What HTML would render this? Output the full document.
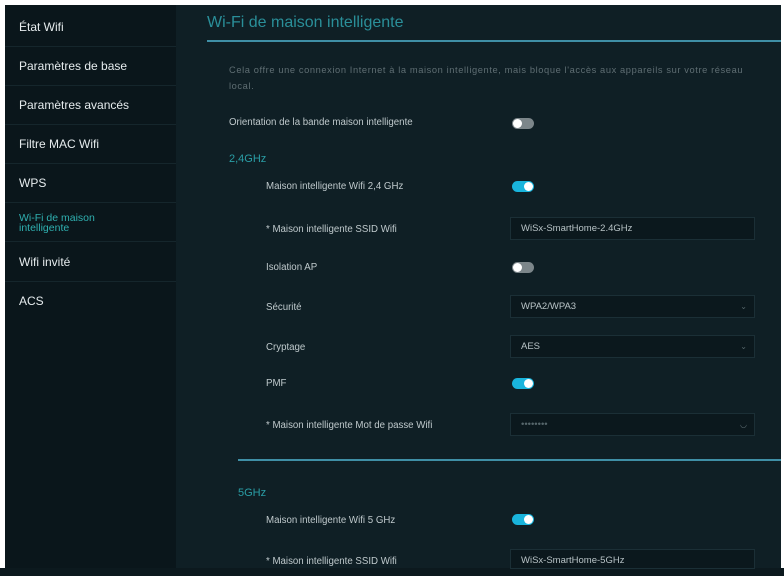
<!DOCTYPE html>
<html><head><meta charset="utf-8"><style>
*{margin:0;padding:0;box-sizing:border-box}
body{width:784px;height:576px;background:#fff;position:relative;overflow:hidden;font-family:"Liberation Sans",sans-serif}
#side{position:absolute;left:5px;top:5px;width:171px;height:563px;background:#0a161b}
#main{position:absolute;left:176px;top:5px;width:605px;height:563px;background:#0f1f25}
#bot{position:absolute;left:0;top:568px;width:784px;height:8px;background:#0c191e}
.si{position:absolute;left:0;width:171px;height:39px;border-bottom:1px solid #15262c;color:#e6ecee;font-size:12px;padding-left:14px;line-height:39px}
.a{position:absolute;font-size:9.7px;color:#bfc9cc;white-space:nowrap}
.tg{position:absolute;width:22px;height:11px;border-radius:6px}
.tg.on{background:#19b4dc}.tg.off{background:#7c868a}
.tg::after{content:"";position:absolute;top:1px;width:9px;height:9px;border-radius:50%;background:#fff}
.tg.on::after{right:1px}.tg.off::after{left:1px}
.in{position:absolute;left:510px;width:245px;height:23px;background:#0b181d;border:1px solid #1b2f36;color:#b8c3c6;font-size:9.5px;line-height:21px;padding-left:10px}
.ch{position:absolute;right:7px;top:0;color:#56666b;font-size:8px}
.sec{position:absolute;color:#2a9ea6;font-size:11px}
</style></head><body>
<div id="side">
<div class="si" style="top:3px">État Wifi</div>
<div class="si" style="top:42px">Paramètres de base</div>
<div class="si" style="top:81px">Paramètres avancés</div>
<div class="si" style="top:120px">Filtre MAC Wifi</div>
<div class="si" style="top:159px">WPS</div>
<div class="si" style="top:198px;color:#2fb0b0;line-height:10px;padding-top:10px;font-size:10.5px">Wi-Fi de maison<br>intelligente</div>
<div class="si" style="top:238px">Wifi invité</div>
<div class="si" style="top:277px;border:none">ACS</div>
</div>
<div id="main"></div>
<div id="bot"></div>
<div style="position:absolute;left:207px;top:14px;color:#2a8f99;font-size:16px">Wi-Fi de maison intelligente</div>
<div style="position:absolute;left:207px;top:40px;width:574px;height:2px;background:#3f8fa6"></div>
<div class="a" style="left:229px;top:62px;color:#5f6e73;font-size:9.3px;line-height:16px;letter-spacing:0.6px">Cela offre une connexion Internet à la maison intelligente, mais bloque l'accès aux appareils sur votre réseau<br>local.</div>
<div class="a" style="left:229px;top:117px">Orientation de la bande maison intelligente</div>
<div class="tg off" style="left:512px;top:118px"></div>
<div class="sec" style="left:229px;top:153px">2,4GHz</div>
<div class="a" style="left:266px;top:181px">Maison intelligente Wifi 2,4 GHz</div>
<div class="tg on" style="left:512px;top:181px"></div>
<div class="a" style="left:266px;top:224px">* Maison intelligente SSID Wifi</div>
<div class="in" style="top:217px">WiSx-SmartHome-2.4GHz</div>
<div class="a" style="left:266px;top:262px">Isolation AP</div>
<div class="tg off" style="left:512px;top:262px"></div>
<div class="a" style="left:266px;top:302px">Sécurité</div>
<div class="in" style="top:295px">WPA2/WPA3<span class="ch">⌄</span></div>
<div class="a" style="left:266px;top:342px">Cryptage</div>
<div class="in" style="top:335px">AES<span class="ch">⌄</span></div>
<div class="a" style="left:266px;top:378px">PMF</div>
<div class="tg on" style="left:512px;top:378px"></div>
<div class="a" style="left:266px;top:420px">* Maison intelligente Mot de passe Wifi</div>
<div class="in" style="top:413px;color:#56666b">••••••••<span class="ch">◡</span></div>
<div style="position:absolute;left:238px;top:459px;width:543px;height:2px;background:#3f8fa6"></div>
<div class="sec" style="left:238px;top:487px">5GHz</div>
<div class="a" style="left:266px;top:515px">Maison intelligente Wifi 5 GHz</div>
<div class="tg on" style="left:512px;top:514px"></div>
<div class="a" style="left:266px;top:556px">* Maison intelligente SSID Wifi</div>
<div class="in" style="top:549px;height:20px">WiSx-SmartHome-5GHz</div>
</body></html>
